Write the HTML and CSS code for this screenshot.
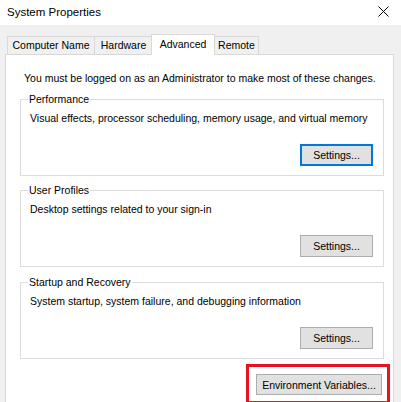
FILE: index.html
```html
<!DOCTYPE html>
<html>
<head>
<meta charset="utf-8">
<link rel="stylesheet" href="styles.css">
</head>
<body>
<div class="window">
  <div class="titlebar">
    <span class="title">System Properties</span>
    <svg class="close" width="11" height="11" viewBox="0 0 11 11"><path d="M0.5 0.5 L10.5 10.5 M10.5 0.5 L0.5 10.5" stroke="#000" stroke-width="1" fill="none"/></svg>
  </div>
  <div class="client">
    <div class="tabs">
      <div class="tab tab-cn">Computer Name</div>
      <div class="tab tab-hw">Hardware</div>
      <div class="tab tab-adv active">Advanced</div>
      <div class="tab tab-rm">Remote</div>
    </div>
    <div class="panel">
      <p class="note">You must be logged on as an Administrator to make most of these changes.</p>
      <fieldset class="group">
        <legend>Performance</legend>
        <p class="desc">Visual effects, processor scheduling, memory usage, and virtual memory</p>
        <div class="actions"><button class="btn focused">Settings...</button></div>
      </fieldset>
      <fieldset class="group">
        <legend>User Profiles</legend>
        <p class="desc">Desktop settings related to your sign-in</p>
        <div class="actions"><button class="btn">Settings...</button></div>
      </fieldset>
      <fieldset class="group group-last">
        <legend>Startup and Recovery</legend>
        <p class="desc">System startup, system failure, and debugging information</p>
        <div class="actions"><button class="btn">Settings...</button></div>
      </fieldset>
      <div class="env-row">
        <button class="btn env">Environment Variables...</button>
        <div class="highlight"></div>
      </div>
    </div>
  </div>
</div>
</body>
</html>
```
FILE: styles.css
```css
* { box-sizing: border-box; }
html, body { margin: 0; padding: 0; }
body {
  width: 401px;
  height: 402px;
  overflow: hidden;
  background: #f0f0f0;
  font-family: "Liberation Sans", Arial, sans-serif;
  font-size: 10.5px;
  color: #000;
}
.titlebar {
  height: 25px;
  background: #fff;
  display: flex;
  align-items: center;
  justify-content: space-between;
  padding: 0 12px 2px 7px;
}
.title { font-size: 11.5px; }
.close { display: block; }
.client { padding: 8px 0 0 5px; }
.tabs {
  display: flex;
  align-items: flex-end;
  padding-left: 2px;
  height: 21px;
}
.tab {
  height: 18px;
  line-height: 16px;
  padding: 0;
  text-align: center;
  border: 1px solid #d9d9d9;
  border-bottom: none;
  margin-right: -1px;
  background: #f0f0f0;
}
.tab-cn { width: 88px; }
.tab-hw { width: 59px; }
.tab-adv { width: 64px; }
.tab-rm { width: 45px; }
.tab.active {
  height: 21px;
  line-height: 18px;
  background: #fff;
  position: relative;
  z-index: 1;
  margin-bottom: -1px;
  margin-left: -1px;
  margin-right: -1px;
}
.panel {
  width: 389px;
  height: 360px;
  background: #fff;
  border: 1px solid #d9d9d9;
  padding: 16px 0 0 14px;
}
.note { margin: 0 0 6px 4px; line-height: 15px; }
.group {
  width: 364px;
  margin: 0 0 7px 0;
  border: 1px solid #dcdcdc;
  padding: 4px 10px 9px 9px;
  min-width: 0;
}
.group-last { margin-top: 8px; }
.group legend {
  padding: 0 1px;
  margin-left: -2px;
  line-height: 15px;
}
.desc { margin: 0; line-height: 15px; }
.actions {
  display: flex;
  justify-content: flex-end;
  margin-top: 18px;
}
.btn {
  font-family: inherit;
  font-size: 10.5px;
  color: #000;
  background: #e1e1e1;
  border: 1px solid #adadad;
  height: 22px;
  width: 73px;
  padding: 0;
  margin: 0;
}
.btn.focused { border: 2px solid #0078d7; }
.env-row {
  position: relative;
  display: flex;
  justify-content: flex-end;
  width: 362px;
  padding-top: 8px;
}
.btn.env { width: 126px; height: 21px; }
.highlight {
  position: absolute;
  left: 226px;
  top: -2px;
  width: 144px;
  height: 40px;
  border: 3px solid #e81123;
}
```
